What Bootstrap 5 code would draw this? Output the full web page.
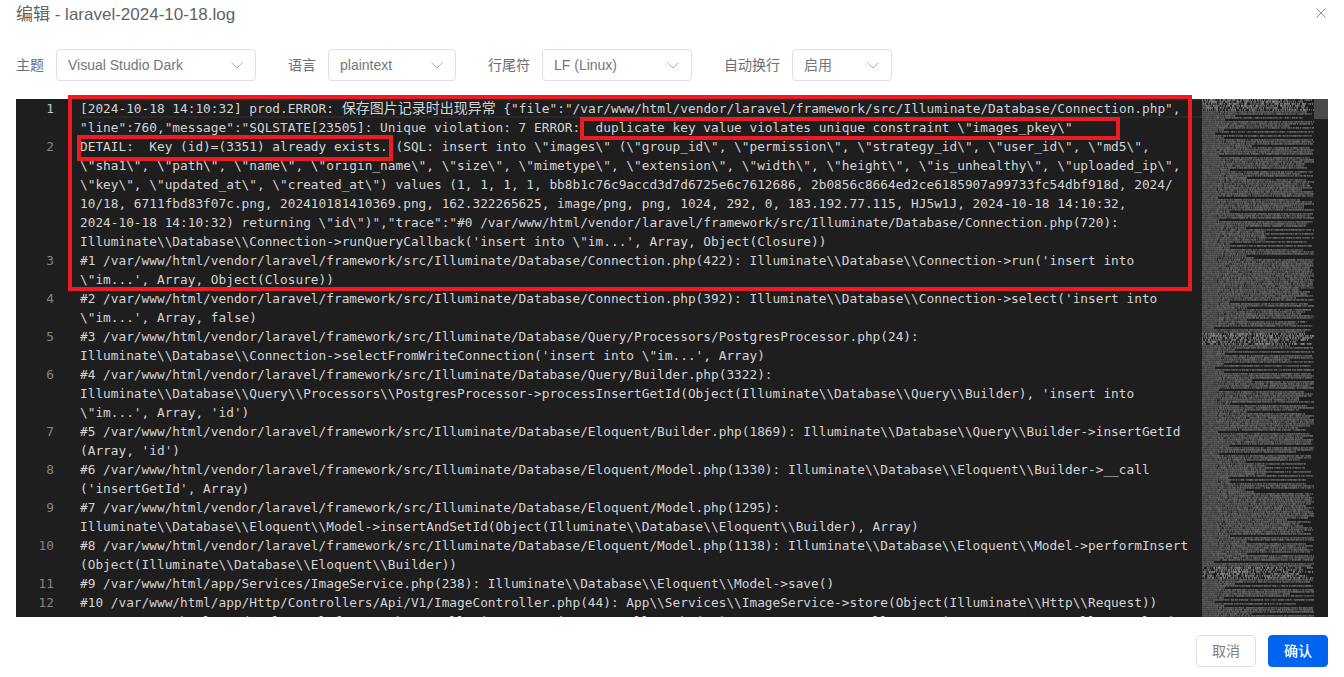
<!DOCTYPE html>
<html lang="zh-CN">
<head>
<meta charset="utf-8">
<title>编辑</title>
<link href="https://cdn.jsdelivr.net/npm/bootstrap@5.3.0/dist/css/bootstrap.min.css" rel="stylesheet">
<style>
html,body{height:100%;overflow:hidden;background:#fff}
body{font-family:"Liberation Sans","Noto Sans CJK SC",sans-serif;font-size:14px;color:#606266}
.shell{height:677px;padding:0 16px}
.dlg-head{height:49px;padding-top:4px}
.dlg-title{font-size:17px;line-height:22px;color:#5f6368;margin:0;font-weight:400}
.dlg-close{width:10px;height:10px;margin:4px 2px 0 0;border:0;background:none;padding:0;display:block}
.bar{height:32px;margin-bottom:18px;gap:32px}
.field{gap:12px;line-height:32px}
.field-label{color:#6b6e75}
.pick{height:32px;border:1px solid #dcdfe6;border-radius:4px;padding:0 11px;color:#73767a;line-height:30px}
.w1{width:200px}.w2{width:128px}.w3{width:150px}.w4{width:100px}
.pick svg{width:14px;height:14px;color:#a8abb2}
.editor-wrap{height:518px}
.editor{height:518px;overflow:hidden;background:#1e1e1e;font-family:"DejaVu Sans Mono","Noto Sans CJK SC",monospace;font-size:12.79px;line-height:19px;color:#d4d4d4}
.gutter{width:64px;flex:none;text-align:right;color:#858585}
.gutter div{height:19px;padding-right:26px;width:64px}
.gutter .cur{color:#c6c6c6}
.code{width:1122px;flex:none;overflow:hidden}
.vl{height:19px;white-space:pre}
.vl.hl{box-shadow:inset 0 -2px 0 #282828,inset 0 2px 0 #282828}
.vl span{font-family:"Noto Sans CJK SC",sans-serif;font-size:14px;line-height:1}
.mini{width:112px;flex:none;display:block}
.rail{width:14px;flex:none}
.thumb{height:20px;background:#4a4a4a}
.mark-box{position:absolute;border:4px solid #ed1c24;pointer-events:none}
.m1{left:52px;top:-4px;width:1124px;height:196px}
.m2{left:564px;top:18px;width:540px;height:23px}
.m3{left:61px;top:36px;width:316px;height:26px}
.dlg-foot{height:60px;padding-top:18px;gap:12px}
.act{width:60px;height:32px;padding:0;font-size:14px;border-radius:4px;line-height:30px}
.act-no{background:#fff;border:1px solid #dcdfe6;color:#7b7e84}
.act-yes{background:#0064ef;border:1px solid #0064ef;color:#fff;font-weight:500}
.act-yes:hover{background:#0064ef;color:#fff}
</style>
</head>
<body>
<div class="shell d-flex flex-column">
  <div class="dlg-head d-flex justify-content-between align-items-start">
    <h1 class="dlg-title">编辑 - laravel-2024-10-18.log</h1>
    <button class="dlg-close" aria-label="关闭"><svg width="10" height="10" viewBox="0 0 10 10" class="d-block"><path d="M.5.5l9 9M9.5.5l-9 9" stroke="#8f9197" stroke-width="1" fill="none"/></svg></button>
  </div>
  <div class="bar d-flex">
    <div class="field d-flex"><span class="field-label">主题</span><div class="pick w1 d-flex justify-content-between align-items-center"><span>Visual Studio Dark</span><svg viewBox="0 0 14 14"><path d="M1.5 4.5L7 10l5.5-5.5" fill="none" stroke="currentColor"/></svg></div></div>
    <div class="field d-flex"><span class="field-label">语言</span><div class="pick w2 d-flex justify-content-between align-items-center"><span>plaintext</span><svg viewBox="0 0 14 14"><path d="M1.5 4.5L7 10l5.5-5.5" fill="none" stroke="currentColor"/></svg></div></div>
    <div class="field d-flex"><span class="field-label">行尾符</span><div class="pick w3 d-flex justify-content-between align-items-center"><span>LF (Linux)</span><svg viewBox="0 0 14 14"><path d="M1.5 4.5L7 10l5.5-5.5" fill="none" stroke="currentColor"/></svg></div></div>
    <div class="field d-flex"><span class="field-label">自动换行</span><div class="pick w4 d-flex justify-content-between align-items-center"><span>启用</span><svg viewBox="0 0 14 14"><path d="M1.5 4.5L7 10l5.5-5.5" fill="none" stroke="currentColor"/></svg></div></div>
  </div>
  <div class="editor-wrap position-relative">
    <div class="editor d-flex">
      <div class="gutter"><div class="cur">1</div><div></div><div>2</div><div></div><div></div><div></div><div></div><div></div><div>3</div><div></div><div>4</div><div></div><div>5</div><div></div><div>6</div><div></div><div></div><div>7</div><div></div><div>8</div><div></div><div>9</div><div></div><div>10</div><div></div><div>11</div><div>12</div><div>13</div></div>
      <div class="code">
<div class="vl hl">[2024-10-18 14:10:32] prod.ERROR: <span>保存图片记录时出现异常</span> {"file":"/var/www/html/vendor/laravel/framework/src/Illuminate/Database/Connection.php",</div>
<div class="vl">"line":760,"message":"SQLSTATE[23505]: Unique violation: 7 ERROR:  duplicate key value violates unique constraint \"images_pkey\"</div>
<div class="vl">DETAIL:  Key (id)=(3351) already exists. (SQL: insert into \"images\" (\"group_id\", \"permission\", \"strategy_id\", \"user_id\", \"md5\",</div>
<div class="vl">\"sha1\", \"path\", \"name\", \"origin_name\", \"size\", \"mimetype\", \"extension\", \"width\", \"height\", \"is_unhealthy\", \"uploaded_ip\",</div>
<div class="vl">\"key\", \"updated_at\", \"created_at\") values (1, 1, 1, 1, bb8b1c76c9accd3d7d6725e6c7612686, 2b0856c8664ed2ce6185907a99733fc54dbf918d, 2024/</div>
<div class="vl">10/18, 6711fbd83f07c.png, 202410181410369.png, 162.322265625, image/png, png, 1024, 292, 0, 183.192.77.115, HJ5w1J, 2024-10-18 14:10:32,</div>
<div class="vl">2024-10-18 14:10:32) returning \"id\")","trace":"#0 /var/www/html/vendor/laravel/framework/src/Illuminate/Database/Connection.php(720):</div>
<div class="vl">Illuminate\\Database\\Connection-&gt;runQueryCallback('insert into \"im...', Array, Object(Closure))</div>
<div class="vl">#1 /var/www/html/vendor/laravel/framework/src/Illuminate/Database/Connection.php(422): Illuminate\\Database\\Connection-&gt;run('insert into</div>
<div class="vl">\"im...', Array, Object(Closure))</div>
<div class="vl">#2 /var/www/html/vendor/laravel/framework/src/Illuminate/Database/Connection.php(392): Illuminate\\Database\\Connection-&gt;select('insert into</div>
<div class="vl">\"im...', Array, false)</div>
<div class="vl">#3 /var/www/html/vendor/laravel/framework/src/Illuminate/Database/Query/Processors/PostgresProcessor.php(24):</div>
<div class="vl">Illuminate\\Database\\Connection-&gt;selectFromWriteConnection('insert into \"im...', Array)</div>
<div class="vl">#4 /var/www/html/vendor/laravel/framework/src/Illuminate/Database/Query/Builder.php(3322):</div>
<div class="vl">Illuminate\\Database\\Query\\Processors\\PostgresProcessor-&gt;processInsertGetId(Object(Illuminate\\Database\\Query\\Builder), 'insert into</div>
<div class="vl">\"im...', Array, 'id')</div>
<div class="vl">#5 /var/www/html/vendor/laravel/framework/src/Illuminate/Database/Eloquent/Builder.php(1869): Illuminate\\Database\\Query\\Builder-&gt;insertGetId</div>
<div class="vl">(Array, 'id')</div>
<div class="vl">#6 /var/www/html/vendor/laravel/framework/src/Illuminate/Database/Eloquent/Model.php(1330): Illuminate\\Database\\Eloquent\\Builder-&gt;__call</div>
<div class="vl">('insertGetId', Array)</div>
<div class="vl">#7 /var/www/html/vendor/laravel/framework/src/Illuminate/Database/Eloquent/Model.php(1295):</div>
<div class="vl">Illuminate\\Database\\Eloquent\\Model-&gt;insertAndSetId(Object(Illuminate\\Database\\Eloquent\\Builder), Array)</div>
<div class="vl">#8 /var/www/html/vendor/laravel/framework/src/Illuminate/Database/Eloquent/Model.php(1138): Illuminate\\Database\\Eloquent\\Model-&gt;performInsert</div>
<div class="vl">(Object(Illuminate\\Database\\Eloquent\\Builder))</div>
<div class="vl">#9 /var/www/html/app/Services/ImageService.php(238): Illuminate\\Database\\Eloquent\\Model-&gt;save()</div>
<div class="vl">#10 /var/www/html/app/Http/Controllers/Api/V1/ImageController.php(44): App\\Services\\ImageService-&gt;store(Object(Illuminate\\Http\\Request))</div>
<div class="vl">#11 /var/www/html/vendor/laravel/framework/src/Illuminate/Routing/Controller.php(54): App\\Http\\Controllers\\Api\\V1\\ImageController-&gt;upload</div>
      </div>
      <div class="flex-grow-1"></div>
      <canvas class="mini" id="mini" width="112" height="518"></canvas>
      <div class="rail"><div class="thumb"></div></div>
    </div>
    <div class="mark-box m1"></div>
    <div class="mark-box m2"></div>
    <div class="mark-box m3"></div>
  </div>
  <div class="dlg-foot d-flex justify-content-end">
    <button class="btn act act-no">取消</button>
    <button class="btn act act-yes">确认</button>
  </div>
</div>
<script>
(function(){
  var c=document.getElementById('mini'),g=c.getContext('2d');
  g.fillStyle='#1e1e1e';g.fillRect(0,0,112,518);
  var seed=12345;function r(){seed=(seed*1664525+1013904223)>>>0;return seed/4294967296;}
  var dark={8:[33,112],10:[23,112],13:[88,112],15:[22,112],17:[13,112],19:[22,112],23:[50,112],28:[17,112],35:[28,112],39:[45,112],49:[16,112],56:[28,112],60:[17,112],64:[44,112],66:[64,112],68:[64,112],70:[64,112],72:[28,112],74:[28,112],78:[44,112],79:[52,112],101:[28,112],104:[45,112],110:[45,112],114:[12,112]};
  for(var y=0;y<259;y++){
    var row=y%117, end=112-Math.floor(r()*r()*r()*34), d=dark[row];
    var noisy=row<6;
    for(var x=0;x<end;x++){
      if(d&&x>=d[0]&&x<d[1])continue;
      var v=Math.round(noisy?(r()<.25?34:60+r()*80):(x<15?72+r()*22:(r()<.08?48:66+r()*38)));
      g.fillStyle='rgb('+v+','+v+','+v+')';
      g.fillRect(x,y*2,1,1);
      var w=v*.85|0;
      g.fillStyle='rgb('+w+','+w+','+w+')';
      g.fillRect(x,y*2+1,1,1);
    }
  }
})();
</script>
<script src="https://cdn.jsdelivr.net/npm/bootstrap@5.3.0/dist/js/bootstrap.bundle.min.js"></script>
</body>
</html>
